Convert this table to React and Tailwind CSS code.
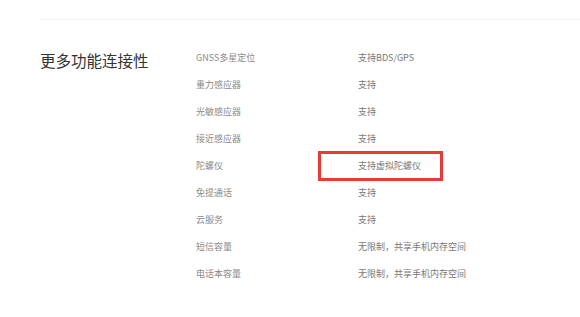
export default function App() {
  const rows = [
    ["GNSS多星定位", "支持BDS/GPS"],
    ["重力感应器", "支持"],
    ["光敏感应器", "支持"],
    ["接近感应器", "支持"],
    ["陀螺仪", "支持虚拟陀螺仪", true],
    ["免提通话", "支持"],
    ["云服务", "支持"],
    ["短信容量", "无限制，共享手机内存空间"],
    ["电话本容量", "无限制，共享手机内存空间"],
  ];
  return (
    <div
      className="w-[580px] h-[317px] bg-white overflow-hidden"
      style={{ fontFamily: '"Noto Sans CJK SC", "Noto Sans", sans-serif' }}
    >
      <div className="pt-[19px] pl-[40px]">
        <div className="h-[1px] bg-[#f2f2f2]" />
        <div className="flex pt-[24px]">
          <div className="w-[156px] pt-[6px] text-[15.5px] leading-[20px] text-[#333]">
            更多功能连接性
          </div>
          <div className="flex flex-col">
            {rows.map(([k, v, hl]) => (
              <div key={k} className="relative flex h-[27px] items-center text-[9px]">
                <div className="w-[162px] text-[#8a8a8a]">{k}</div>
                <div className="text-[#777]">{v}</div>
                {hl && (
                  <div className="absolute left-[122px] top-[-1px] w-[125px] h-[30px] border-[3px] border-[#e93a3a]" />
                )}
              </div>
            ))}
          </div>
        </div>
      </div>
    </div>
  );
}
